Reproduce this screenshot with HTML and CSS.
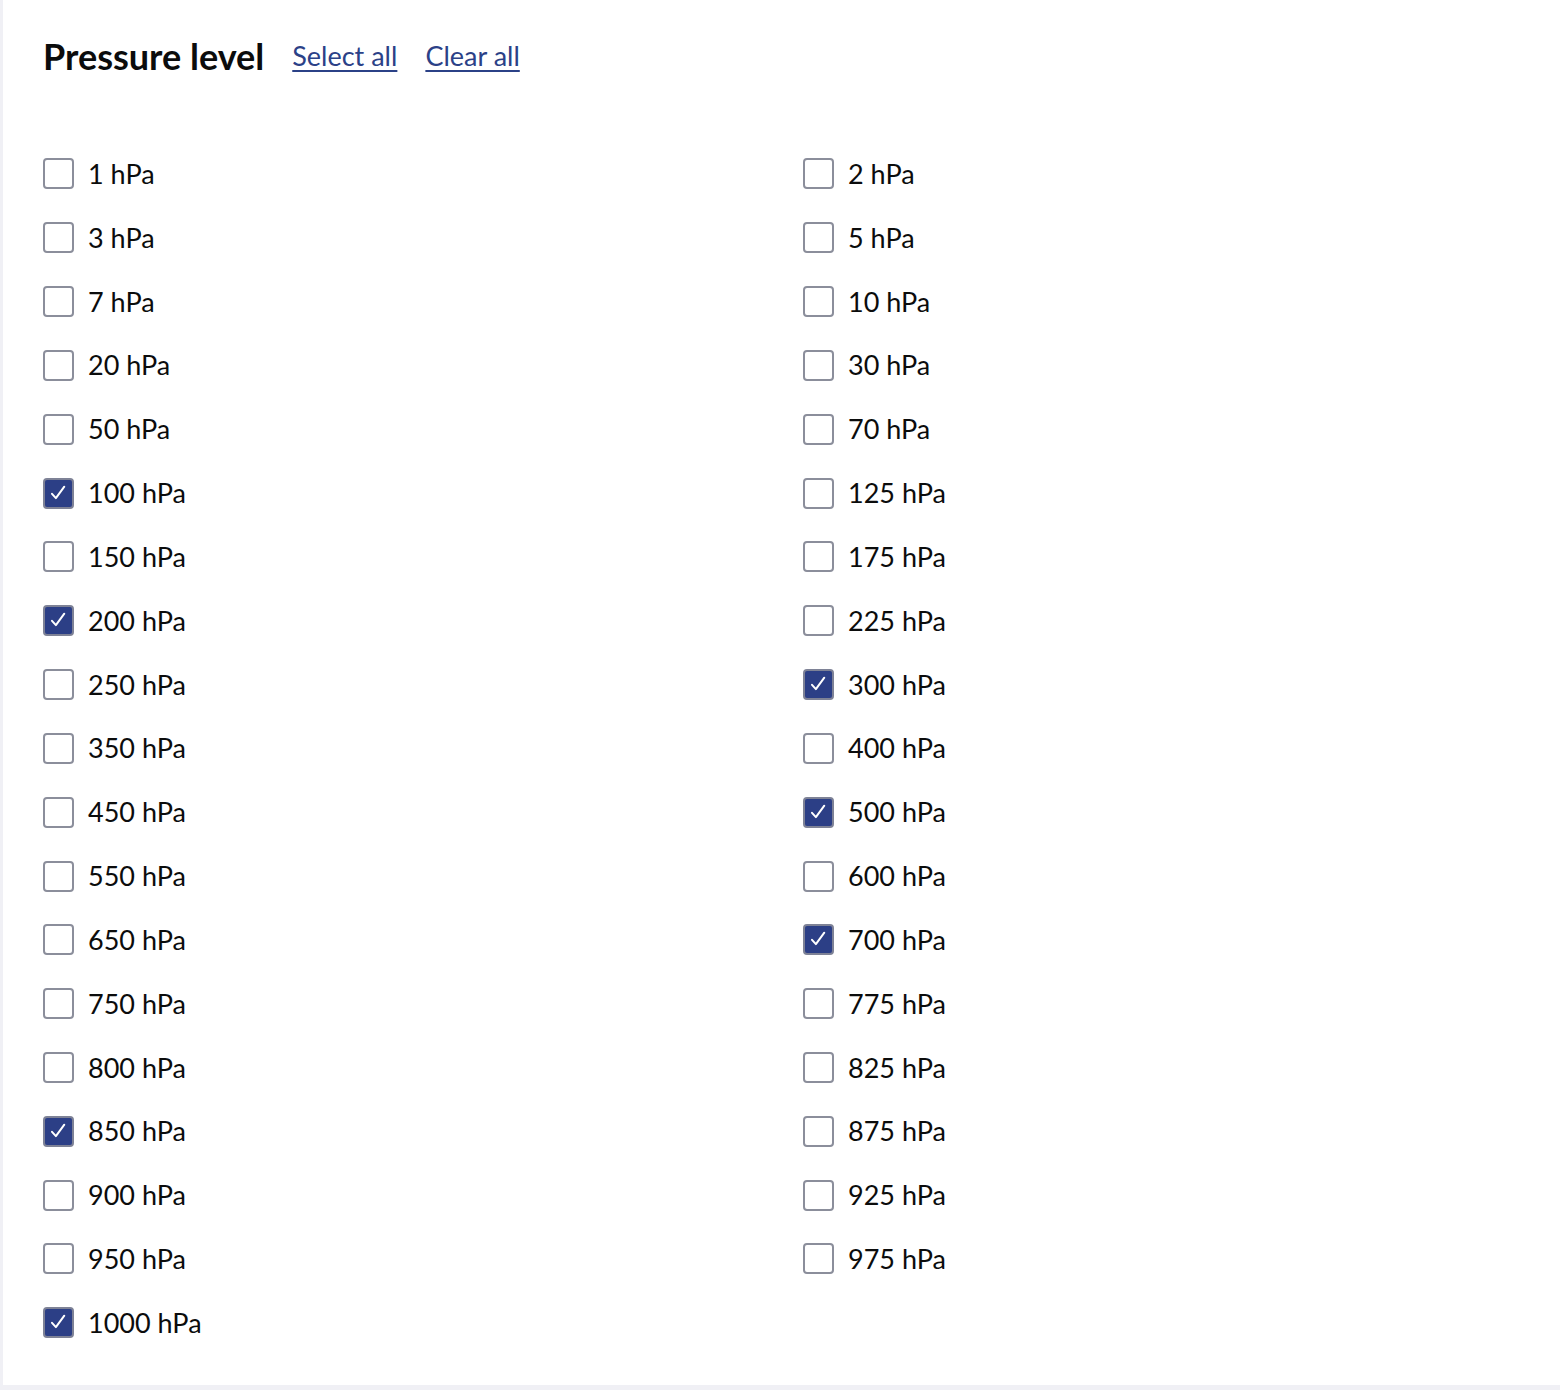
FILE: index.html
```html
<!DOCTYPE html>
<html lang="en">
<head>
<meta charset="utf-8">
<title>Pressure level</title>
<link rel="stylesheet" href="styles.css">
</head>
<body>
<div class="panel">
  <div class="header">
    <h2 class="title">Pressure level</h2>
    <a class="link" href="#">Select all</a>
    <a class="link" href="#">Clear all</a>
  </div>
  <div class="grid">
    <label class="item"><span class="box"></span><span class="text">1 hPa</span></label>
    <label class="item"><span class="box"></span><span class="text">2 hPa</span></label>
    <label class="item"><span class="box"></span><span class="text">3 hPa</span></label>
    <label class="item"><span class="box"></span><span class="text">5 hPa</span></label>
    <label class="item"><span class="box"></span><span class="text">7 hPa</span></label>
    <label class="item"><span class="box"></span><span class="text">10 hPa</span></label>
    <label class="item"><span class="box"></span><span class="text">20 hPa</span></label>
    <label class="item"><span class="box"></span><span class="text">30 hPa</span></label>
    <label class="item"><span class="box"></span><span class="text">50 hPa</span></label>
    <label class="item"><span class="box"></span><span class="text">70 hPa</span></label>
    <label class="item"><span class="box checked"><svg viewBox="0 0 27 27"><path d="M7 13.8l3.9 4.3 8.4-11.4"/></svg></span><span class="text">100 hPa</span></label>
    <label class="item"><span class="box"></span><span class="text">125 hPa</span></label>
    <label class="item"><span class="box"></span><span class="text">150 hPa</span></label>
    <label class="item"><span class="box"></span><span class="text">175 hPa</span></label>
    <label class="item"><span class="box checked"><svg viewBox="0 0 27 27"><path d="M7 13.8l3.9 4.3 8.4-11.4"/></svg></span><span class="text">200 hPa</span></label>
    <label class="item"><span class="box"></span><span class="text">225 hPa</span></label>
    <label class="item"><span class="box"></span><span class="text">250 hPa</span></label>
    <label class="item"><span class="box checked"><svg viewBox="0 0 27 27"><path d="M7 13.8l3.9 4.3 8.4-11.4"/></svg></span><span class="text">300 hPa</span></label>
    <label class="item"><span class="box"></span><span class="text">350 hPa</span></label>
    <label class="item"><span class="box"></span><span class="text">400 hPa</span></label>
    <label class="item"><span class="box"></span><span class="text">450 hPa</span></label>
    <label class="item"><span class="box checked"><svg viewBox="0 0 27 27"><path d="M7 13.8l3.9 4.3 8.4-11.4"/></svg></span><span class="text">500 hPa</span></label>
    <label class="item"><span class="box"></span><span class="text">550 hPa</span></label>
    <label class="item"><span class="box"></span><span class="text">600 hPa</span></label>
    <label class="item"><span class="box"></span><span class="text">650 hPa</span></label>
    <label class="item"><span class="box checked"><svg viewBox="0 0 27 27"><path d="M7 13.8l3.9 4.3 8.4-11.4"/></svg></span><span class="text">700 hPa</span></label>
    <label class="item"><span class="box"></span><span class="text">750 hPa</span></label>
    <label class="item"><span class="box"></span><span class="text">775 hPa</span></label>
    <label class="item"><span class="box"></span><span class="text">800 hPa</span></label>
    <label class="item"><span class="box"></span><span class="text">825 hPa</span></label>
    <label class="item"><span class="box checked"><svg viewBox="0 0 27 27"><path d="M7 13.8l3.9 4.3 8.4-11.4"/></svg></span><span class="text">850 hPa</span></label>
    <label class="item"><span class="box"></span><span class="text">875 hPa</span></label>
    <label class="item"><span class="box"></span><span class="text">900 hPa</span></label>
    <label class="item"><span class="box"></span><span class="text">925 hPa</span></label>
    <label class="item"><span class="box"></span><span class="text">950 hPa</span></label>
    <label class="item"><span class="box"></span><span class="text">975 hPa</span></label>
    <label class="item"><span class="box checked"><svg viewBox="0 0 27 27"><path d="M7 13.8l3.9 4.3 8.4-11.4"/></svg></span><span class="text">1000 hPa</span></label>
  </div>
</div>
</body>
</html>
```

FILE: styles.css
```css
html, body {
  margin: 0;
  padding: 0;
}
body {
  background: #f0f0f5;
  font-family: Lato, "Noto Sans", sans-serif;
  color: #0b0c0c;
  height: 1390px;
}
.panel {
  background: #ffffff;
  margin-left: 3px;
  height: 1385px;
  box-sizing: border-box;
  padding: 33px 40px 0 40px;
}
.header {
  display: flex;
  align-items: center;
  gap: 28px;
}
.title {
  margin: 0;
  font-size: 36px;
  font-weight: 700;
  line-height: 46px;
  color: #0b0c0c;
}
.link {
  font-size: 27px;
  line-height: 32px;
  color: #2b4187;
  text-decoration: underline;
  text-decoration-thickness: 2px;
  text-underline-offset: 4px;
}
.grid {
  margin-top: 63px;
  display: grid;
  grid-template-columns: 760px 1fr;
  grid-auto-rows: 63.83px;
}
.item {
  display: flex;
  align-items: center;
  gap: 14px;
  font-size: 27px;
}
.box {
  width: 31px;
  height: 31px;
  box-sizing: border-box;
  border: 2px solid #8b8e9b;
  border-radius: 4px;
  background: #fff;
  display: flex;
  align-items: center;
  justify-content: center;
  flex: none;
}
.box.checked {
  background: #2c3f86;
  border-color: #7e8296;
}
.box svg {
  width: 27px;
  height: 27px;
}
.box path {
  fill: none;
  stroke: #ffffff;
  stroke-width: 2;
  stroke-linecap: round;
  stroke-linejoin: round;
}
.text {
  line-height: 32px;
}
```
